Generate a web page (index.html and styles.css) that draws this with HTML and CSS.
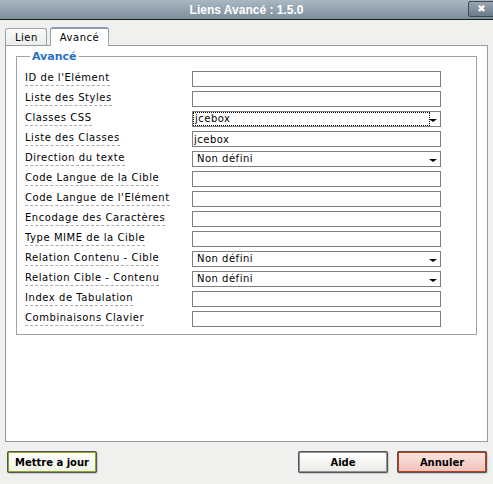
FILE: index.html
```html
<!DOCTYPE html>
<html lang="fr">
<head>
  <meta charset="UTF-8">
  <title>Liens Avancé : 1.5.0</title>
  <link rel="stylesheet" href="styles.css">
</head>
<body>
  <div class="titlebar">
    <span class="title">Liens Avancé : 1.5.0</span>
    <span class="close">&#10006;</span>
  </div>

  <div class="tabs">
    <span class="tab">Lien</span>
    <span class="tab current">Avancé</span>
  </div>

  <div class="panel">
    <fieldset class="group">
      <legend>Avancé</legend>
      <div class="rows">
        <label>ID de l'Elément</label>
        <input type="text">
        <label>Liste des Styles</label>
        <input type="text">
        <label>Classes CSS</label>
        <div class="select focus"><span>jcebox</span></div>
        <label>Liste des Classes</label>
        <input type="text" value="jcebox">
        <label>Direction du texte</label>
        <div class="select"><span>Non défini</span></div>
        <label>Code Langue de la Cible</label>
        <input type="text">
        <label>Code Langue de l'Elément</label>
        <input type="text">
        <label>Encodage des Caractères</label>
        <input type="text">
        <label>Type MIME de la Cible</label>
        <input type="text">
        <label>Relation Contenu - Cible</label>
        <div class="select"><span>Non défini</span></div>
        <label>Relation Cible - Contenu</label>
        <div class="select"><span>Non défini</span></div>
        <label>Index de Tabulation</label>
        <input type="text">
        <label>Combinaisons Clavier</label>
        <input type="text">
      </div>
    </fieldset>
  </div>

  <div class="footer">
    <button class="btn update">Mettre a jour</button>
    <span class="spacer"></span>
    <button class="btn">Aide</button>
    <button class="btn cancel">Annuler</button>
  </div>
</body>
</html>
```

FILE: styles.css
```css
body {
  margin: 0;
  width: 493px;
  height: 484px;
  background: #f0f0ee;
  font-family: "DejaVu Sans", Verdana, sans-serif;
  font-size: 10px;
  color: #000;
  overflow: hidden;
}

/* barre de titre */
.titlebar {
  height: 19px;
  border-bottom: 1px solid #1a1a1a;
  background: linear-gradient(#aab8c3, #7d8d9a);
  display: flex;
  align-items: center;
  justify-content: center;
  position: relative;
}
.title {
  color: #fff;
  font-family: "Liberation Sans", Arial, sans-serif;
  font-weight: bold;
  font-size: 12px;
}
.close {
  position: absolute;
  right: -2px;
  top: 1px;
  width: 25px;
  height: 14px;
  border: 1px solid #3e4a55;
  border-radius: 2px;
  background: linear-gradient(#97a6b2, #6c7b88);
  color: #fff;
  font-size: 10px;
  font-weight: bold;
  line-height: 14px;
  text-align: center;
}

/* onglets */
.tabs {
  display: flex;
  gap: 3px;
  padding: 7px 0 0 5px;
  height: 18px;
  align-items: flex-end;
}
.tab {
  height: 16px;
  padding: 0 8px 0 9px;
  border: 1px solid #97a2ab;
  border-bottom: none;
  border-radius: 3px 3px 0 0;
  background: linear-gradient(#fbfbfb, #ecece8);
  font-size: 10px;
  letter-spacing: 0.5px;
  line-height: 17px;
}
.tab.current {
  height: 17px;
  padding: 0 9px 0 9px;
  background: #fff;
  border-top: 2px solid #8a9bb0;
  position: relative;
  top: 1px;
}

/* panneau */
.panel {
  margin: 0 5px 0 5px;
  height: 391px;
  background: #fff;
  border: 1px solid #949d9e;
  padding: 4px 10px 0 10px;
}
.group {
  margin: 0;
  padding: 8px 0 7px 8px;
  border: 1px solid #9aa4a6;
}
.group legend {
  color: #2a6fbf;
  font-weight: bold;
  font-size: 11px;
  padding: 0 2px;
  margin-left: 5px;
}
.rows {
  display: grid;
  grid-template-columns: 167px 249px;
  grid-auto-rows: 16px;
  row-gap: 4px;
}
.rows label {
  align-self: center;
  justify-self: start;
  line-height: 12px;
  padding-bottom: 1px;
  letter-spacing: 0.55px;
  border-bottom: 1px dashed #aaa;
}
.rows input,
.select {
  box-sizing: border-box;
  height: 16px;
  margin: 0;
  border: 1px solid #7f7f7f;
  font-family: inherit;
  font-size: 10px;
  letter-spacing: 0.5px;
  padding: 0 1px;
  background: #fff;
}
.select {
  position: relative;
  padding-left: 4px;
  line-height: 14px;
}
.select::after {
  content: "";
  position: absolute;
  right: 3px;
  top: 7px;
  border: 4px solid transparent;
  border-top: 3px solid #000;
  border-bottom: none;
}
.select.focus span {
  display: block;
  margin: 1px 10px 0 -3px;
  padding-left: 1px;
  outline: 1px dotted #000;
  line-height: 12px;
}

/* boutons */
.footer {
  display: flex;
  padding: 9px 6px 0 7px;
  gap: 9px;
}
.spacer {
  flex: 1;
}
.btn {
  width: 90px;
  height: 22px;
  padding: 0;
  white-space: nowrap;
  font-family: "DejaVu Sans", Verdana, sans-serif;
  font-weight: bold;
  font-size: 10px;
  border: 2px solid #8e9196;
  outline: 1px solid #555;
  outline-offset: -1px;
  border-radius: 2px;
  background: linear-gradient(#fff, #ecebe6);
  box-shadow: 1px 1px 1px #ccc;
}
.btn.update {
  border-color: #8aa52b;
  background: linear-gradient(#fff, #f1f3e6);
}
.btn.cancel {
  border-color: #c23a1c;
  background: linear-gradient(#fbe4df, #f0c3bb);
}
```
